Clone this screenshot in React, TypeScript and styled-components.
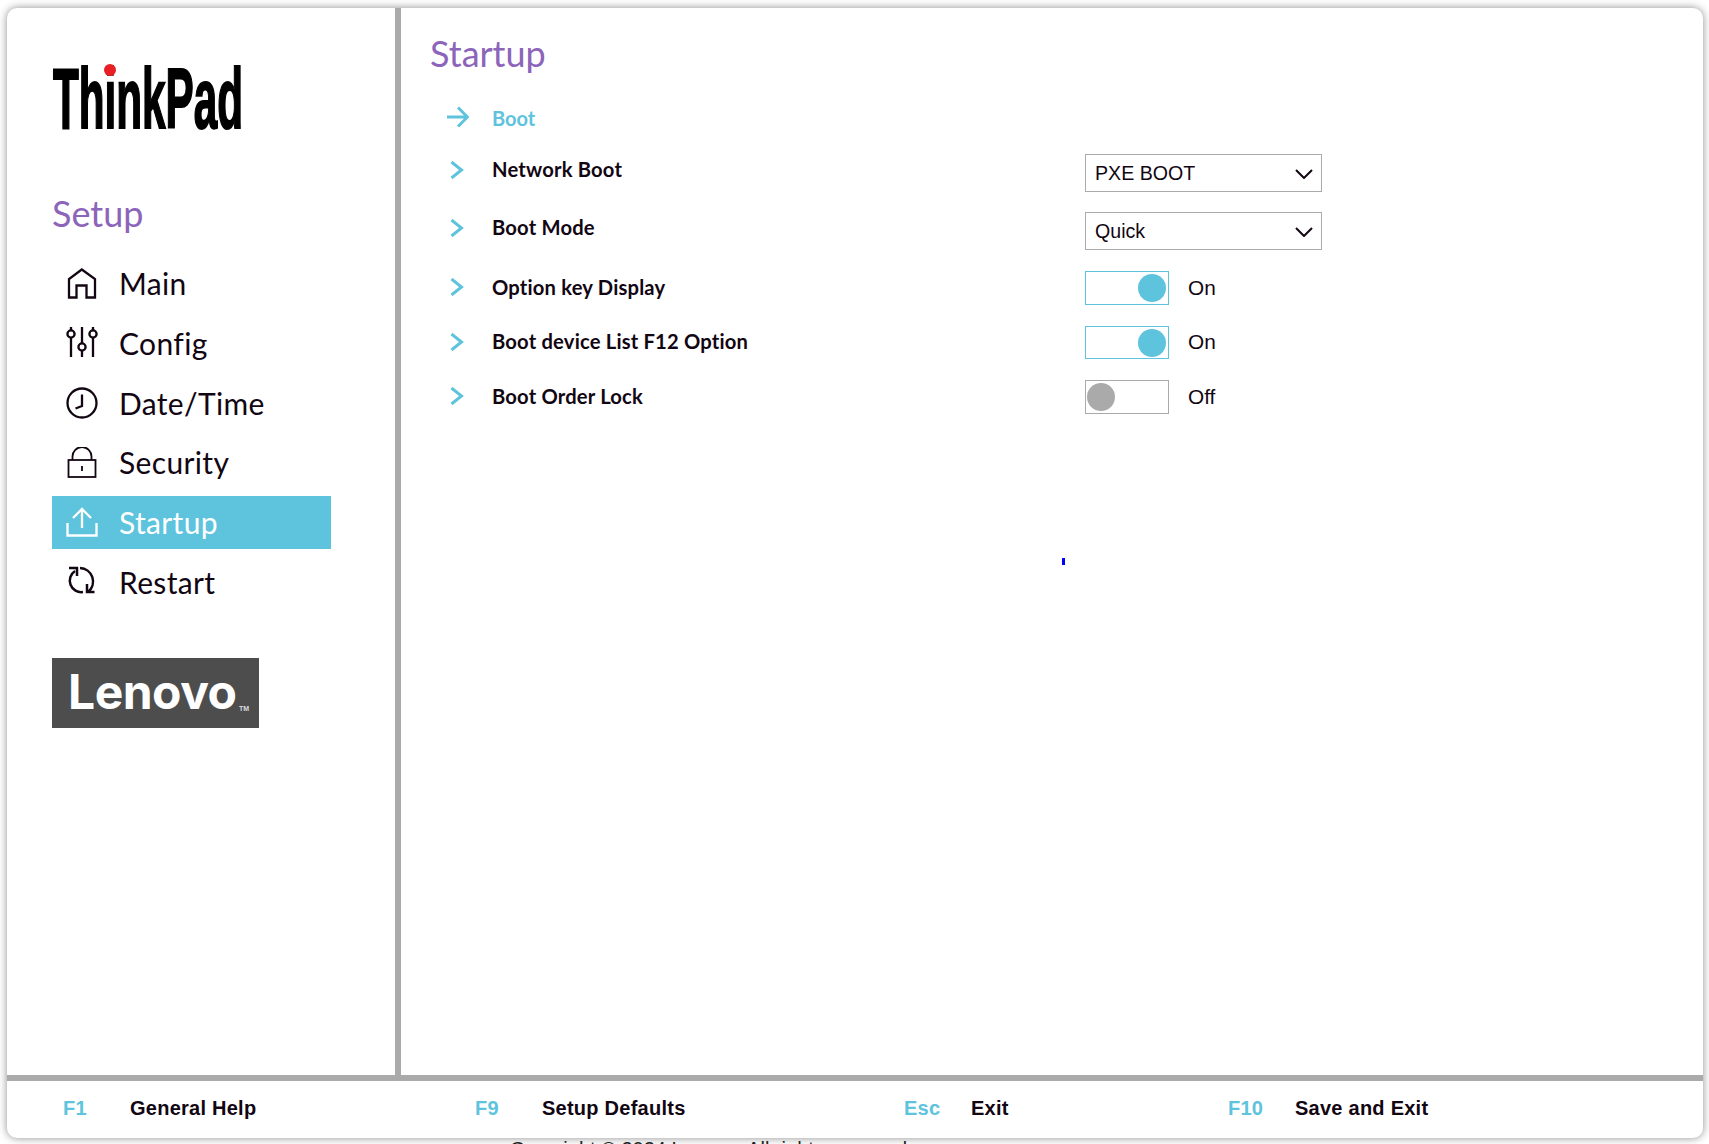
import styled, { createGlobalStyle } from 'styled-components';
import { ReactNode } from 'react';

const GlobalStyle = createGlobalStyle`
  html, body {
    margin: 0;
    padding: 0;
    height: 100%;
    overflow: hidden;
    background: #fff;
  }
  * { box-sizing: border-box; }
`;

const BLUE = '#5ec3dc';
const PURPLE = '#8c65ba';
const GREY = '#aaaaaa';
const INK = '#120612';
const UI_FONT = 'Lato, "Noto Sans", sans-serif';
const BIOS_FONT = '"Liberation Sans", Arial, sans-serif';

const Page = styled.div`
  height: 100vh;
  padding: 8px 6px 0 7px;
  overflow: hidden;
`;

const Card = styled.div`
  height: 1130px;
  display: flex;
  flex-direction: column;
  background: #fff;
  border-radius: 10px;
  box-shadow: 0 0 8px rgba(0, 0, 0, 0.45);
  overflow: hidden;
`;

const Body = styled.div`
  flex: 1 0;
  display: flex;
  min-height: 0;
`;

const Sidebar = styled.aside`
  width: 394px;
  padding: 56px 0 0 45px;
  border-right: 6px solid ${GREY};
`;

const LogoWrap = styled.div`
  height: 66px;
  margin-left: 1px;
  svg { display: block; overflow: visible; }
`;

const SetupTitle = styled.h2`
  margin: 60px 0 21px;
  height: 46px;
  font: 400 36px/46px ${UI_FONT};
  color: ${PURPLE};
`;

const Nav = styled.ul`
  list-style: none;
  margin: 0;
  padding: 0;
  display: flex;
  flex-direction: column;
  gap: 6.75px;
`;

const NavItem = styled.li<{ $active?: boolean }>`
  width: 279px;
  height: 53px;
  display: flex;
  align-items: center;
  gap: 21px;
  padding-left: 14px;
  font: 400 30px/1 ${UI_FONT};
  letter-spacing: 0.35px;
  color: ${(p) => (p.$active ? '#fff' : INK)};
  background: ${(p) => (p.$active ? BLUE : 'transparent')};
  svg { flex: none; }
`;

const NavLabel = styled.span`
  margin-top: -1px;
`;

const LenovoBadge = styled.div`
  position: relative;
  width: 207px;
  height: 70px;
  margin-top: 49px;
  padding: 1px 0 0 16px;
  background: #4d4d4d;
  color: #fff;
  font: 700 48px/66px Inter, "Open Sans", sans-serif;
  letter-spacing: -0.5px;
`;

const Trademark = styled.span`
  position: absolute;
  right: 10px;
  bottom: 16px;
  font: 700 7px/1 ${BIOS_FONT};
  letter-spacing: 0;
  color: #ddd;
`;

const Main = styled.main`
  flex: 1;
  position: relative;
  padding: 22px 0 0 29px;
`;

const PageTitle = styled.h1`
  margin: 0 0 22px;
  font: 400 36px/46px ${UI_FONT};
  color: ${PURPLE};
`;

const RowList = styled.div`
  display: flex;
  flex-direction: column;
  gap: 20px;
`;

const SectionRow = styled.div`
  height: 40px;
  margin-bottom: 16px;
  display: flex;
  align-items: center;
  color: ${BLUE};
  font: 700 20px/1 ${UI_FONT};
`;

const SectionLabel = styled.span`
  padding-bottom: 1px;
  margin-left: -1px;
`;

const Row = styled.div<{ $nudge?: number }>`
  display: grid;
  grid-template-columns: 62px 593px 1fr;
  align-items: center;
  margin-top: ${(p) => p.$nudge ?? 0}px;
`;

const IconCell = styled.div<{ $wide?: boolean; $lift?: boolean }>`
  width: 63px;
  flex: none;
  padding-left: ${(p) => (p.$wide ? 17 : 20)}px;
  padding-bottom: ${(p) => (p.$lift ? 6 : 2)}px;
  display: flex;
  svg { display: block; }
`;

const Label = styled.div<{ $lift?: boolean }>`
  font: 700 20.2px/1 ${UI_FONT};
  letter-spacing: 0.18px;
  color: ${INK};
  padding-bottom: ${(p) => (p.$lift ? 7 : 2)}px;
`;

const SelectBox = styled.div`
  width: 237px;
  height: 38px;
  display: flex;
  align-items: center;
  justify-content: space-between;
  padding: 1px 8px 0 9px;
  border: 1px solid ${GREY};
  font: 400 19.6px/1 ${BIOS_FONT};
  color: ${INK};
`;

const ToggleWrap = styled.div`
  display: flex;
  align-items: center;
  gap: 19px;
`;

const ToggleTrack = styled.div<{ $on: boolean; $h: number }>`
  width: 84px;
  height: ${(p) => p.$h}px;
  display: flex;
  align-items: center;
  justify-content: ${(p) => (p.$on ? 'flex-end' : 'flex-start')};
  padding: 0 2px 0 1px;
  border: 1px solid ${(p) => (p.$on ? BLUE : GREY)};
`;

const Knob = styled.div<{ $on: boolean }>`
  width: 28px;
  height: 28px;
  border-radius: 50%;
  background: ${(p) => (p.$on ? BLUE : GREY)};
`;

const ToggleText = styled.span`
  font: 400 20.8px/1 ${BIOS_FONT};
  color: ${INK};
`;

const Speck = styled.div`
  position: absolute;
  left: 661px;
  top: 550px;
  width: 3px;
  height: 7px;
  background: #0000ff;
`;

const Footer = styled.footer`
  height: 63px;
  flex: none;
  display: flex;
  align-items: center;
  padding: 0 0 3px 56px;
  border-top: 6px solid ${GREY};
  font: 700 20px/1 ${BIOS_FONT};
  letter-spacing: 0.25px;
`;

const FooterItem = styled.div<{ $w: number }>`
  width: ${(p) => p.$w}px;
  display: flex;
`;

const FooterKey = styled.span`
  width: 67px;
  color: ${BLUE};
`;

const FooterLabel = styled.span`
  color: ${INK};
`;

const Copyright = styled.div`
  margin: -1px 0 0 503px;
  font: 400 20px/24px ${BIOS_FONT};
  color: #222;
  white-space: nowrap;
`;

function ThinkPadLogo() {
  return (
    <svg width="190" height="66" viewBox="0 0 190 66">
      <text
        x="0"
        y="64"
        textLength="190"
        lengthAdjust="spacingAndGlyphs"
        fontFamily='"Liberation Sans", Arial, sans-serif'
        fontWeight="700"
        fontSize="85"
        fill="#000"
        stroke="#000"
        strokeWidth="2"
      >
        ThinkPad
      </text>
      <circle cx="57" cy="6" r="6" fill="#e81f25" />
    </svg>
  );
}

const Stroke = ({ children, color = INK, w = 2.3 }: { children: ReactNode; color?: string; w?: number }) => (
  <svg width="32" height="32" viewBox="0 0 32 32" fill="none" stroke={color} strokeWidth={w}>
    {children}
  </svg>
);

const HomeIcon = () => (
  <Stroke>
    <path d="M3 29.5V11L15.8 1.5 29 11v18.5h-8.5V17.5h-10v12z" />
  </Stroke>
);

const SlidersIcon = () => (
  <Stroke>
    <path d="M5 0v3M5 11v19M16 0v16M16 24v6M27 0v3M27 11v19" />
    <circle cx="5" cy="7" r="3.6" />
    <circle cx="16" cy="20" r="3.6" />
    <circle cx="27" cy="7" r="3.6" />
  </Stroke>
);

const ClockIcon = () => (
  <Stroke>
    <circle cx="16" cy="16" r="14.5" />
    <path d="M16 7.5V19l-6.5 2.5" />
  </Stroke>
);

const LockIcon = () => (
  <Stroke w={1.8}>
    <rect x="2.5" y="13" width="27" height="17" />
    <path d="M6.5 13V9.5a9.5 9.5 0 0 1 19 0V13M16 19v5" />
  </Stroke>
);

const UploadIcon = () => (
  <Stroke color="#fff">
    <path d="M16 2v19M7 11l9-9 9 9M1.5 16v12.5h29V16" />
  </Stroke>
);

const RestartIcon = () => (
  <Stroke w={2.5}>
    <path d="M9 5A11.5 11.5 0 0 0 17 26M14 2A13.5 13.5 0 0 1 22 26" />
    <path d="M3 2h8v8M21 18v8h7.5" />
  </Stroke>
);

const ChevronRight = () => (
  <svg width="14" height="18" viewBox="0 0 14 18" fill="none" stroke={BLUE} strokeWidth="3">
    <path d="M1.5 1l10 8-10 8" />
  </svg>
);

const ArrowRight = () => (
  <svg width="22" height="22" viewBox="0 0 22 22" fill="none" stroke={BLUE} strokeWidth="3">
    <path d="M0 11h20M11 1.5l9.5 9.5-9.5 9.5" />
  </svg>
);

const ChevronDown = () => (
  <svg width="18" height="10" viewBox="0 0 18 10" fill="none" stroke={INK} strokeWidth="2">
    <path d="M1 1l8 8 8-8" />
  </svg>
);

const navItems = [
  { label: 'Main', icon: <HomeIcon /> },
  { label: 'Config', icon: <SlidersIcon /> },
  { label: 'Date/Time', icon: <ClockIcon /> },
  { label: 'Security', icon: <LockIcon /> },
  { label: 'Startup', icon: <UploadIcon />, active: true },
  { label: 'Restart', icon: <RestartIcon /> },
];

const footerItems = [
  { k: 'F1', label: 'General Help', w: 412 },
  { k: 'F9', label: 'Setup Defaults', w: 429 },
  { k: 'Esc', label: 'Exit', w: 324 },
  { k: 'F10', label: 'Save and Exit', w: 300 },
];

function Toggle({ on, h = 34 }: { on: boolean; h?: number }) {
  return (
    <ToggleWrap>
      <ToggleTrack $on={on} $h={h}>
        <Knob $on={on} />
      </ToggleTrack>
      <ToggleText>{on ? 'On' : 'Off'}</ToggleText>
    </ToggleWrap>
  );
}

export default function App() {
  return (
    <Page>
      <GlobalStyle />
      <Card>
        <Body>
          <Sidebar>
            <LogoWrap>
              <ThinkPadLogo />
            </LogoWrap>
            <SetupTitle>Setup</SetupTitle>
            <Nav>
              {navItems.map((item) => (
                <NavItem key={item.label} $active={item.active}>
                  {item.icon}
                  <NavLabel>{item.label}</NavLabel>
                </NavItem>
              ))}
            </Nav>
            <LenovoBadge>
              Lenovo
              <Trademark>TM</Trademark>
            </LenovoBadge>
          </Sidebar>
          <Main>
            <PageTitle>Startup</PageTitle>
            <SectionRow>
              <IconCell $wide>
                <ArrowRight />
              </IconCell>
              <SectionLabel>Boot</SectionLabel>
            </SectionRow>
            <RowList>
              <Row>
                <IconCell $lift><ChevronRight /></IconCell>
                <Label $lift>Network Boot</Label>
                <SelectBox>PXE BOOT<ChevronDown /></SelectBox>
              </Row>
              <Row>
                <IconCell $lift><ChevronRight /></IconCell>
                <Label $lift>Boot Mode</Label>
                <SelectBox>Quick<ChevronDown /></SelectBox>
              </Row>
              <Row $nudge={1}>
                <IconCell><ChevronRight /></IconCell>
                <Label>Option key Display</Label>
                <Toggle on />
              </Row>
              <Row $nudge={1}>
                <IconCell><ChevronRight /></IconCell>
                <Label>Boot device List F12 Option</Label>
                <Toggle on h={33} />
              </Row>
              <Row $nudge={1}>
                <IconCell><ChevronRight /></IconCell>
                <Label>Boot Order Lock</Label>
                <Toggle on={false} />
              </Row>
            </RowList>
            <Speck />
          </Main>
        </Body>
        <Footer>
          {footerItems.map((item) => (
            <FooterItem key={item.k} $w={item.w}>
              <FooterKey>{item.k}</FooterKey>
              <FooterLabel>{item.label}</FooterLabel>
            </FooterItem>
          ))}
        </Footer>
      </Card>
      <Copyright>Copyright © 2024 Lenovo. All rights reserved.</Copyright>
    </Page>
  );
}
